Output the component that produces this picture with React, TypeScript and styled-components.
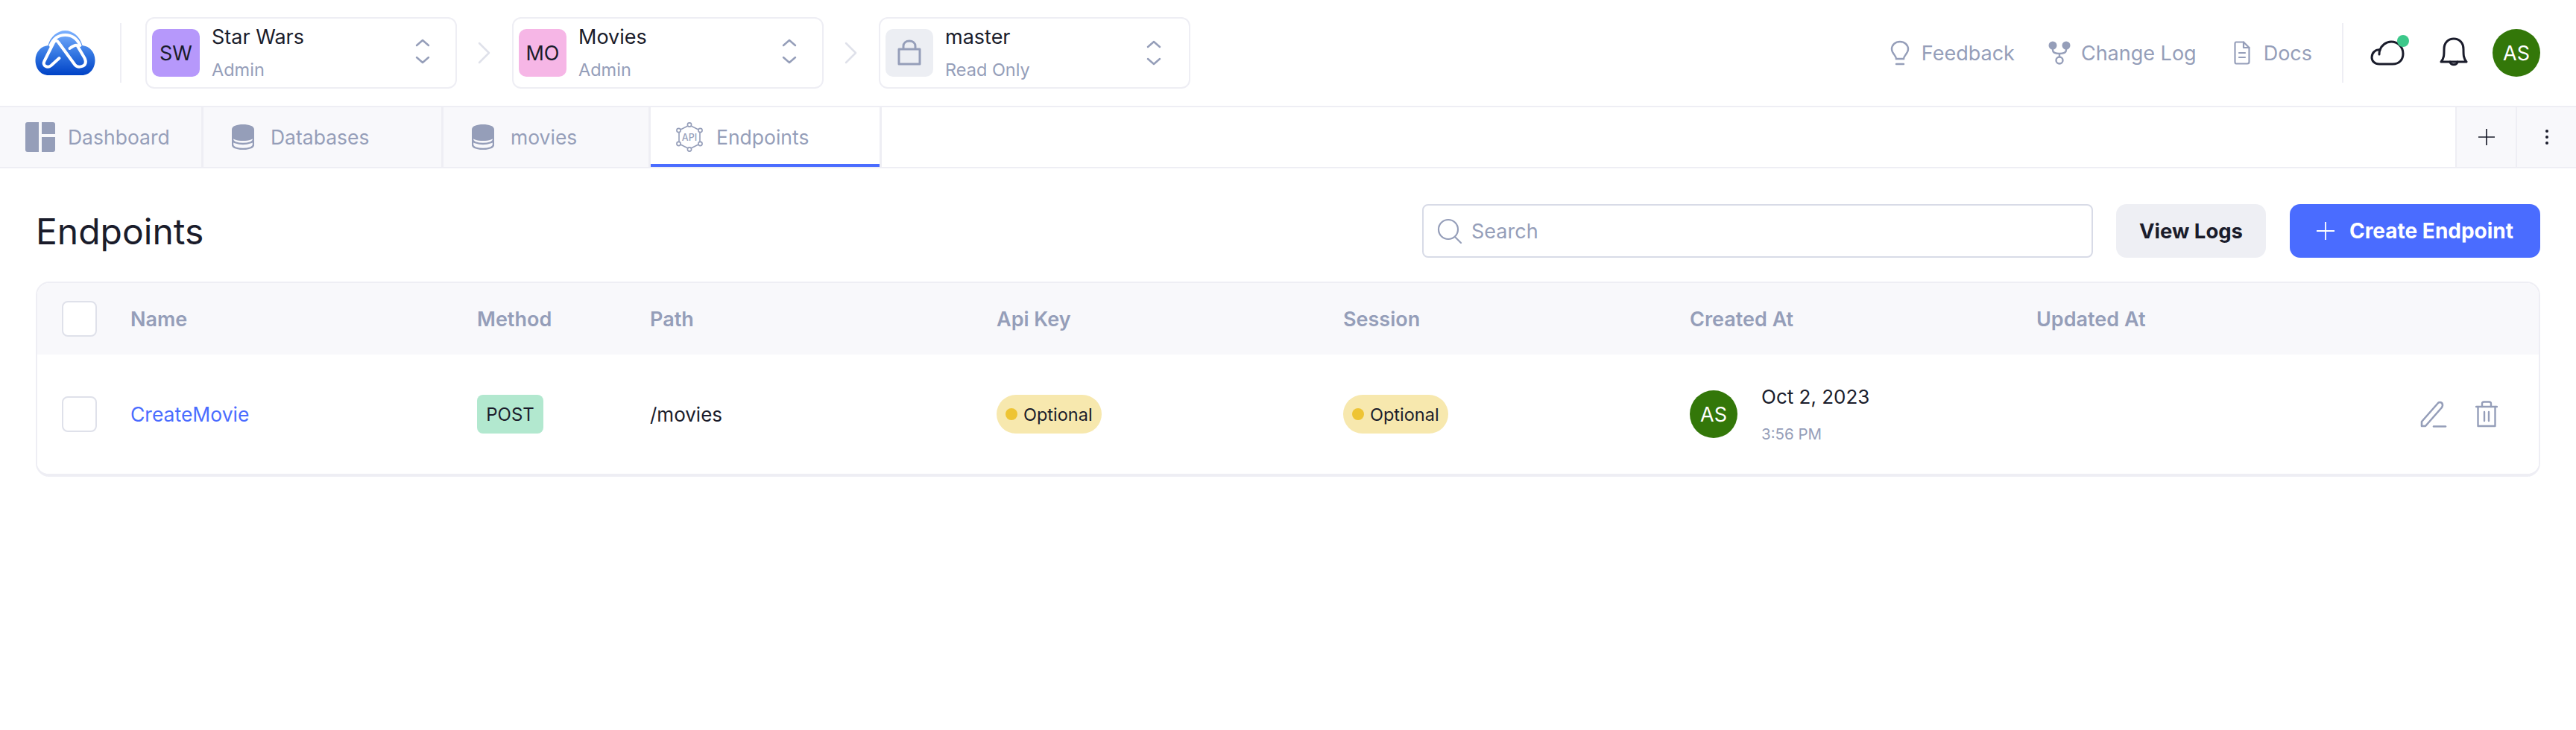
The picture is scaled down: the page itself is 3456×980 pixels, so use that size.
import styled, { createGlobalStyle } from 'styled-components';

const GlobalStyle = createGlobalStyle`
  html, body {
    margin: 0;
    padding: 0;
    background: #ffffff;
    color: #1a1c2b;
    font-family: Inter, "Liberation Sans", sans-serif;
  }
  * {
    box-sizing: border-box;
  }
`;

const muted = '#959eb9';
const line = '#eeeef4';
const dark = '#1a1c2b';

const Page = styled.div`
  width: 3456px;
  min-height: 980px;
  background: #ffffff;
`;

const TopBar = styled.header`
  display: flex;
  align-items: center;
  height: 142px;
  padding: 0 48px 0 47px;
`;

const Logo = styled.svg`
  width: 81px;
  height: 60px;
  margin-right: 33px;
`;

const VDivider = styled.div<{ $gap: number }>`
  width: 2px;
  height: 80px;
  background: ${line};
  margin-right: ${(p) => p.$gap}px;
`;

const Selector = styled.div`
  display: flex;
  align-items: center;
  width: 418px;
  height: 96px;
  padding: 0 0 0 7px;
  border: 2px solid ${line};
  border-radius: 12px;
`;

const Tile = styled.div<{ $bg: string }>`
  display: flex;
  align-items: center;
  justify-content: center;
  flex: 0 0 64px;
  height: 64px;
  margin-right: 16px;
  border-radius: 10px;
  background: ${(p) => p.$bg};
  font-size: 27px;
  color: ${dark};
`;

const SelectorText = styled.div`
  flex: 1;
  display: flex;
  flex-direction: column;
  gap: 14px;
`;

const SelectorTitle = styled.div`
  font-size: 27px;
  line-height: 32px;
  color: ${dark};
`;

const SelectorRole = styled.div`
  font-size: 23.5px;
  line-height: 28px;
  color: ${muted};
`;

const ChevronSvg = styled.svg<{ $low?: boolean }>`
  flex: none;
  width: 20px;
  height: 34px;
  margin-right: ${(p) => (p.$low ? 37 : 34)}px;
  margin-bottom: ${(p) => (p.$low ? 0 : 4)}px;
`;

const Crumb = styled.svg`
  width: 18px;
  height: 30px;
  margin: 0 28px;
  flex: none;
`;

const TopLinks = styled.div`
  display: flex;
  align-items: center;
  margin-left: auto;
`;

const TopLink = styled.a<{ $ml: number; $gap: number }>`
  display: flex;
  align-items: center;
  gap: ${(p) => p.$gap}px;
  margin-left: ${(p) => p.$ml}px;
  font-size: 27px;
  color: ${muted};
`;

const TopIcons = styled.div`
  display: flex;
  align-items: center;
  margin-left: 40px;
`;

const CloudWrap = styled.div`
  position: relative;
  display: flex;
  margin-left: 36px;
`;

const OnlineDot = styled.span`
  position: absolute;
  top: -7px;
  right: -6px;
  width: 16px;
  height: 16px;
  border-radius: 50%;
  background: #3cc88a;
`;

const Round = styled.div`
  flex: none;
  display: flex;
  align-items: center;
  justify-content: center;
  width: 64px;
  height: 64px;
  border-radius: 50%;
  background: #337709;
  color: #ffffff;
  font-size: 27px;
`;

const BellBox = styled.svg`
  width: 38px;
  height: 42px;
  margin: 0 33px 0 47px;
`;

const TabBar = styled.nav`
  display: flex;
  height: 84px;
  border-top: 2px solid ${line};
  border-bottom: 2px solid ${line};
`;

const Tab = styled.div<{ $w: number; $pad: number; $gap: number; $active?: boolean }>`
  display: flex;
  align-items: center;
  gap: ${(p) => p.$gap}px;
  width: ${(p) => p.$w}px;
  padding-left: ${(p) => p.$pad}px;
  font-size: 26.5px;
  color: ${muted};
  background: ${(p) => (p.$active ? '#ffffff' : '#f8f8fb')};
  border-right: 3px solid ${line};
  box-shadow: ${(p) => (p.$active ? 'inset 0 -4px 0 #4a6cff' : 'none')};
`;

const TabSpacer = styled.div`
  flex: 1;
`;

const TabAction = styled.div`
  display: flex;
  align-items: center;
  justify-content: center;
  width: 81px;
  background: #f8f8fb;
  border-left: 2px solid ${line};
`;

const Main = styled.main`
  padding: 48px 48px 0 48px;
`;

const TitleRow = styled.div`
  display: flex;
  align-items: center;
  height: 72px;
  margin-bottom: 32px;
`;

const Title = styled.h1`
  margin: 0 auto 0 0;
  font-size: 48px;
  font-weight: 400;
  color: ${dark};
`;

const SearchBox = styled.div`
  display: flex;
  align-items: center;
  gap: 12px;
  width: 900px;
  height: 72px;
  padding-left: 18px;
  margin-right: 31px;
  border: 2px solid #d8dbe7;
  border-radius: 8px;
  font-size: 27px;
  color: ${muted};
`;

const Button = styled.button<{ $primary?: boolean }>`
  display: flex;
  align-items: center;
  justify-content: center;
  gap: 20px;
  height: 72px;
  width: ${(p) => (p.$primary ? 336 : 201)}px;
  margin-left: ${(p) => (p.$primary ? 32 : 0)}px;
  border: none;
  border-radius: 14px;
  background: ${(p) => (p.$primary ? '#4a6cff' : '#eeeff4')};
  color: ${(p) => (p.$primary ? '#ffffff' : dark)};
  font-family: inherit;
  font-size: ${(p) => (p.$primary ? 28 : 27.5)}px;
  font-weight: 700;
`;

const Table = styled.div`
  height: 262px;
  border: 2px solid ${line};
  border-bottom-width: 4px;
  border-radius: 18px;
  overflow: hidden;
`;

const Row = styled.div<{ $head?: boolean }>`
  display: grid;
  grid-template-columns: 125px 465px 232px 465px 465px 465px 465px 1fr;
  align-items: center;
  height: ${(p) => (p.$head ? 96 : 160)}px;
  background: ${(p) => (p.$head ? '#f8f8fb' : '#ffffff')};
`;

const CheckCell = styled.div`
  padding-left: 33px;
`;

const Check = styled.div`
  width: 47px;
  height: 48px;
  border: 2px solid #dfe1ea;
  border-radius: 8px;
  background: #ffffff;
`;

const HeadCell = styled.div`
  font-size: 27px;
  font-weight: 600;
  color: ${muted};
`;

const Cell = styled.div`
  font-size: 26px;
  color: ${dark};
`;

const NameLink = styled.a`
  font-size: 26.5px;
  color: #4a6cff;
`;

const MethodBadge = styled.span`
  display: inline-flex;
  align-items: center;
  justify-content: center;
  width: 89px;
  height: 52px;
  border-radius: 8px;
  background: #b2e8cf;
  font-size: 24px;
  color: ${dark};
`;

const Pill = styled.span`
  display: inline-flex;
  align-items: center;
  gap: 8px;
  width: 141px;
  height: 52px;
  padding-left: 12px;
  border-radius: 26px;
  background: #f7e8ae;
  font-size: 23.5px;
  color: ${dark};
`;

const PillDot = styled.i`
  width: 16px;
  height: 16px;
  border-radius: 50%;
  background: #eec433;
`;

const Creator = styled.div`
  display: flex;
  align-items: center;
  gap: 32px;
`;

const DateStack = styled.div`
  display: flex;
  flex-direction: column;
  gap: 22px;
`;

const DateMain = styled.div`
  font-size: 26px;
  line-height: 32px;
  color: ${dark};
`;

const DateSub = styled.div`
  font-size: 20.5px;
  line-height: 24px;
  color: ${muted};
`;

const Actions = styled.div`
  display: flex;
  align-items: center;
  justify-content: flex-end;
  gap: 38px;
  padding-right: 55px;
`;

const Dots = styled.svg`
  width: 6px;
  height: 22px;
`;

const Chevrons = ({ low }: { low?: boolean }) => (
  <ChevronSvg $low={low} viewBox="0 0 20 34" fill="none" stroke={muted} strokeWidth="2.5" strokeLinecap="round" strokeLinejoin="round">
    <path d="M2 9 L10 2 L18 9" />
    <path d="M2 25 L10 32 L18 25" />
  </ChevronSvg>
);

const CrumbIcon = () => (
  <Crumb viewBox="0 0 18 30" fill="none" stroke="#dfe1ea" strokeWidth="2.5" strokeLinecap="round" strokeLinejoin="round">
    <path d="M2 2 L15 15 L2 28" />
  </Crumb>
);

const LockIcon = () => (
  <svg width="32" height="36" viewBox="0 0 32 36" fill="none" stroke={muted} strokeWidth="3" strokeLinejoin="round">
    <path d="M2 13 H30 V33 H2 Z" />
    <path d="M8 13 V9 C8 4.5 11.5 2 16 2 C20.5 2 24 4.5 24 9 V13" />
  </svg>
);

const DashboardIcon = () => (
  <svg width="40" height="40" viewBox="0 0 40 40" fill={muted}>
    <path d="M3 0 H18 V40 H3 Q0 40 0 37 V3 Q0 0 3 0 Z" />
    <path d="M22 0 H37 Q40 0 40 3 V16 H22 Z" />
    <path d="M22 20 H40 V37 Q40 40 37 40 H22 Z" />
  </svg>
);

const DatabaseIcon = () => (
  <svg width="30" height="34" viewBox="0 0 30 34" fill="none">
    <path d="M0 7 C0 2 7 0 15 0 C23 0 30 2 30 7 V16 C30 20 23 22 15 22 C7 22 0 20 0 16 Z" fill={muted} />
    <path d="M1 16 V20 C1 24 8 26 15 26 C22 26 29 24 29 20 V16 M1 21 V27 C1 31 8 33 15 33 C22 33 29 31 29 27 V21" stroke={muted} strokeWidth="2.4" />
  </svg>
);

const ApiIcon = () => (
  <svg width="36" height="40" viewBox="0 0 36 40" fill="none" stroke={muted} strokeWidth="1.6">
    <path d="M18 4 L32 11 V29 L18 36 L4 29 V11 Z" />
    <g fill="#ffffff">
      <circle cx="18" cy="3.5" r="2.6" />
      <circle cx="18" cy="36.5" r="2.6" />
      <circle cx="3.5" cy="11" r="2.6" />
      <circle cx="32.5" cy="11" r="2.6" />
      <circle cx="3.5" cy="29" r="2.6" />
      <circle cx="32.5" cy="29" r="2.6" />
    </g>
    <text x="18" y="24.5" textAnchor="middle" fontSize="12.5" fontWeight="500" fill={muted} stroke="none" fontFamily="Inter, sans-serif">API</text>
  </svg>
);

const BulbIcon = () => (
  <svg width="26" height="34" viewBox="0 0 26 34" fill="none" stroke={muted} strokeWidth="2.4" strokeLinecap="round">
    <path d="M8 25 C8 20 2 18 2 12 C2 6 7 2 13 2 C19 2 24 6 24 12 C24 18 18 20 18 25 Z" />
    <path d="M8 32 H18" />
  </svg>
);

const BranchIcon = () => (
  <svg width="30" height="32" viewBox="0 0 30 32" fill="none" stroke={muted} strokeWidth="2.4">
    <circle cx="6" cy="6" r="5.5" fill={muted} stroke="none" />
    <circle cx="24" cy="6" r="5.5" fill={muted} stroke="none" />
    <circle cx="15" cy="26" r="4.5" />
    <path d="M6 10 V12 C6 16 10 17 15 17 C20 17 24 16 24 12 V10 M15 17 V22" />
  </svg>
);

const DocIcon = () => (
  <svg width="22" height="32" viewBox="0 0 22 32" fill="none" stroke={muted} strokeWidth="2.2" strokeLinejoin="round" strokeLinecap="round">
    <path d="M3 1.5 H13 L20.5 9 V28 Q20.5 30.5 18 30.5 H3 Q1.5 30.5 1.5 28 V4 Q1.5 1.5 3 1.5 Z" />
    <path d="M13 1.5 V9 H20.5" />
    <path d="M7 16 H15 M7 22 H15" />
  </svg>
);

const CloudIcon = () => (
  <svg width="46" height="34" viewBox="0 0 46 34" fill="none" stroke={dark} strokeWidth="3" strokeLinecap="round" strokeLinejoin="round">
    <path d="M12 32 H30 C39 32 44 26 44 18 C44 9 37 2 28 2 C21 2 15 7 13 13 C7 12 2 17 2 23 C2 28 6 32 12 32 Z" />
    <path d="M13 13 C12 15 12 17 12 19" />
  </svg>
);

const SearchIcon = () => (
  <svg width="34" height="34" viewBox="0 0 34 34" fill="none" stroke={muted} strokeWidth="2.2" strokeLinecap="round">
    <circle cx="15" cy="15" r="13" />
    <path d="M24 25 L32 33" />
  </svg>
);

const PenIcon = () => (
  <svg width="36" height="36" viewBox="0 0 36 36" fill="none" stroke={muted} strokeWidth="2.6" strokeLinecap="round" strokeLinejoin="round">
    <path d="M2 28 L24 3 C26 1 30 2 30 6 C30 7 29.5 8 29 9 L7 34 H2 Z" />
    <path d="M18 34.5 H34" />
  </svg>
);

const TrashIcon = () => (
  <svg width="30" height="36" viewBox="0 0 30 36" fill="none" stroke={muted} strokeWidth="2.4" strokeLinecap="round" strokeLinejoin="round">
    <path d="M1 8 H29" />
    <path d="M3.5 8 V34 H26.5 V8" />
    <path d="M9 8 V4 Q9 1.5 11.5 1.5 H18.5 Q21 1.5 21 4 V8" />
    <path d="M12 15 V27 M18 15 V27" />
  </svg>
);

const PlusIcon = ({ color, size }: { color: string; size: number }) => (
  <svg width={size} height={size} viewBox="0 0 24 24" fill="none" stroke={color} strokeWidth="1.8">
    <path d="M12 0 V24 M0 12 H24" />
  </svg>
);

const columns = ['Name', 'Method', 'Path', 'Api Key', 'Session', 'Created At', 'Updated At'];

export default function App() {
  return (
    <Page>
      <GlobalStyle />
      <TopBar>
        <Logo viewBox="0 0 80 60">
          <defs>
            <linearGradient id="logoFill" x1="0" y1="0" x2="0" y2="1">
              <stop offset="0" stopColor="#7db2ff" />
              <stop offset="0.55" stopColor="#2f73e0" />
              <stop offset="1" stopColor="#0042c6" />
            </linearGradient>
          </defs>
          <path d="M18 60 C6 60 0 50 0 40 C0 28 8 21 17 20 C20 8 30 0 40 0 C50 0 60 8 63 20 C72 21 80 28 80 40 C80 50 74 60 62 60 Z" fill="url(#logoFill)" />
          <g fill="none" stroke="#ffffff" strokeWidth="4" strokeLinecap="round" strokeLinejoin="round">
            <path d="M20 20 C24 11 31 6 40 6 C49 6 56 11 60 20" />
            <path d="M32 37 L21 47 C16 51 9 47 12 41 L24 17 C26 13 29 13 31 16 L53 46 C57 51 66 48 67 44 C68 41 67 39 66 37 L56 20 C54 19 50 21 46 24" />
          </g>
        </Logo>
        <VDivider $gap={32} />
        <Selector>
          <Tile $bg="#b698fb">SW</Tile>
          <SelectorText>
            <SelectorTitle>Star Wars</SelectorTitle>
            <SelectorRole>Admin</SelectorRole>
          </SelectorText>
          <Chevrons />
        </Selector>
        <CrumbIcon />
        <Selector>
          <Tile $bg="#f6b6e6">MO</Tile>
          <SelectorText>
            <SelectorTitle>Movies</SelectorTitle>
            <SelectorRole>Admin</SelectorRole>
          </SelectorText>
          <Chevrons />
        </Selector>
        <CrumbIcon />
        <Selector>
          <Tile $bg="#eceef3">
            <LockIcon />
          </Tile>
          <SelectorText>
            <SelectorTitle>master</SelectorTitle>
            <SelectorRole>Read Only</SelectorRole>
          </SelectorText>
          <Chevrons low />
        </Selector>
        <TopLinks>
          <TopLink $ml={0} $gap={16}>
            <BulbIcon />
            Feedback
          </TopLink>
          <TopLink $ml={45} $gap={14}>
            <BranchIcon />
            Change Log
          </TopLink>
          <TopLink $ml={50} $gap={18}>
            <DocIcon />
            Docs
          </TopLink>
        </TopLinks>
        <TopIcons>
          <VDivider $gap={0} />
          <CloudWrap>
            <CloudIcon />
            <OnlineDot />
          </CloudWrap>
          <BellBox viewBox="0 0 38 42" fill="none" stroke={dark} strokeWidth="3" strokeLinecap="round" strokeLinejoin="round">
            <path d="M2 33 C6 28 6 24 6 16 C6 7 12 2 19 2 C26 2 32 7 32 16 C32 24 32 28 36 33 Z" />
            <path d="M14 33 C14 38 24 38 24 33" />
          </BellBox>
          <Round>AS</Round>
        </TopIcons>
      </TopBar>
      <TabBar>
        <Tab $w={273} $pad={34} $gap={17}>
          <DashboardIcon />
          Dashboard
        </Tab>
        <Tab $w={322} $pad={38} $gap={22}>
          <DatabaseIcon />
          Databases
        </Tab>
        <Tab $w={278} $pad={38} $gap={22}>
          <DatabaseIcon />
          movies
        </Tab>
        <Tab $w={310} $pad={34} $gap={18} $active>
          <ApiIcon />
          Endpoints
        </Tab>
        <TabSpacer />
        <TabAction>
          <PlusIcon color={dark} size={22} />
        </TabAction>
        <TabAction>
          <Dots viewBox="0 0 6 22" fill={dark}>
            <circle cx="3" cy="3" r="2" />
            <circle cx="3" cy="11" r="2" />
            <circle cx="3" cy="19" r="2" />
          </Dots>
        </TabAction>
      </TabBar>
      <Main>
        <TitleRow>
          <Title>Endpoints</Title>
          <SearchBox>
            <SearchIcon />
            Search
          </SearchBox>
          <Button>View Logs</Button>
          <Button $primary>
            <PlusIcon color="#ffffff" size={24} />
            Create Endpoint
          </Button>
        </TitleRow>
        <Table>
          <Row $head>
            <CheckCell>
              <Check />
            </CheckCell>
            {columns.map((c) => (
              <HeadCell key={c}>{c}</HeadCell>
            ))}
          </Row>
          <Row>
            <CheckCell>
              <Check />
            </CheckCell>
            <NameLink>CreateMovie</NameLink>
            <Cell>
              <MethodBadge>POST</MethodBadge>
            </Cell>
            <Cell>/movies</Cell>
            <Cell>
              <Pill>
                <PillDot />
                Optional
              </Pill>
            </Cell>
            <Cell>
              <Pill>
                <PillDot />
                Optional
              </Pill>
            </Cell>
            <Creator>
              <Round>AS</Round>
              <DateStack>
                <DateMain>Oct 2, 2023</DateMain>
                <DateSub>3:56 PM</DateSub>
              </DateStack>
            </Creator>
            <Actions>
              <PenIcon />
              <TrashIcon />
            </Actions>
          </Row>
        </Table>
      </Main>
    </Page>
  );
}
